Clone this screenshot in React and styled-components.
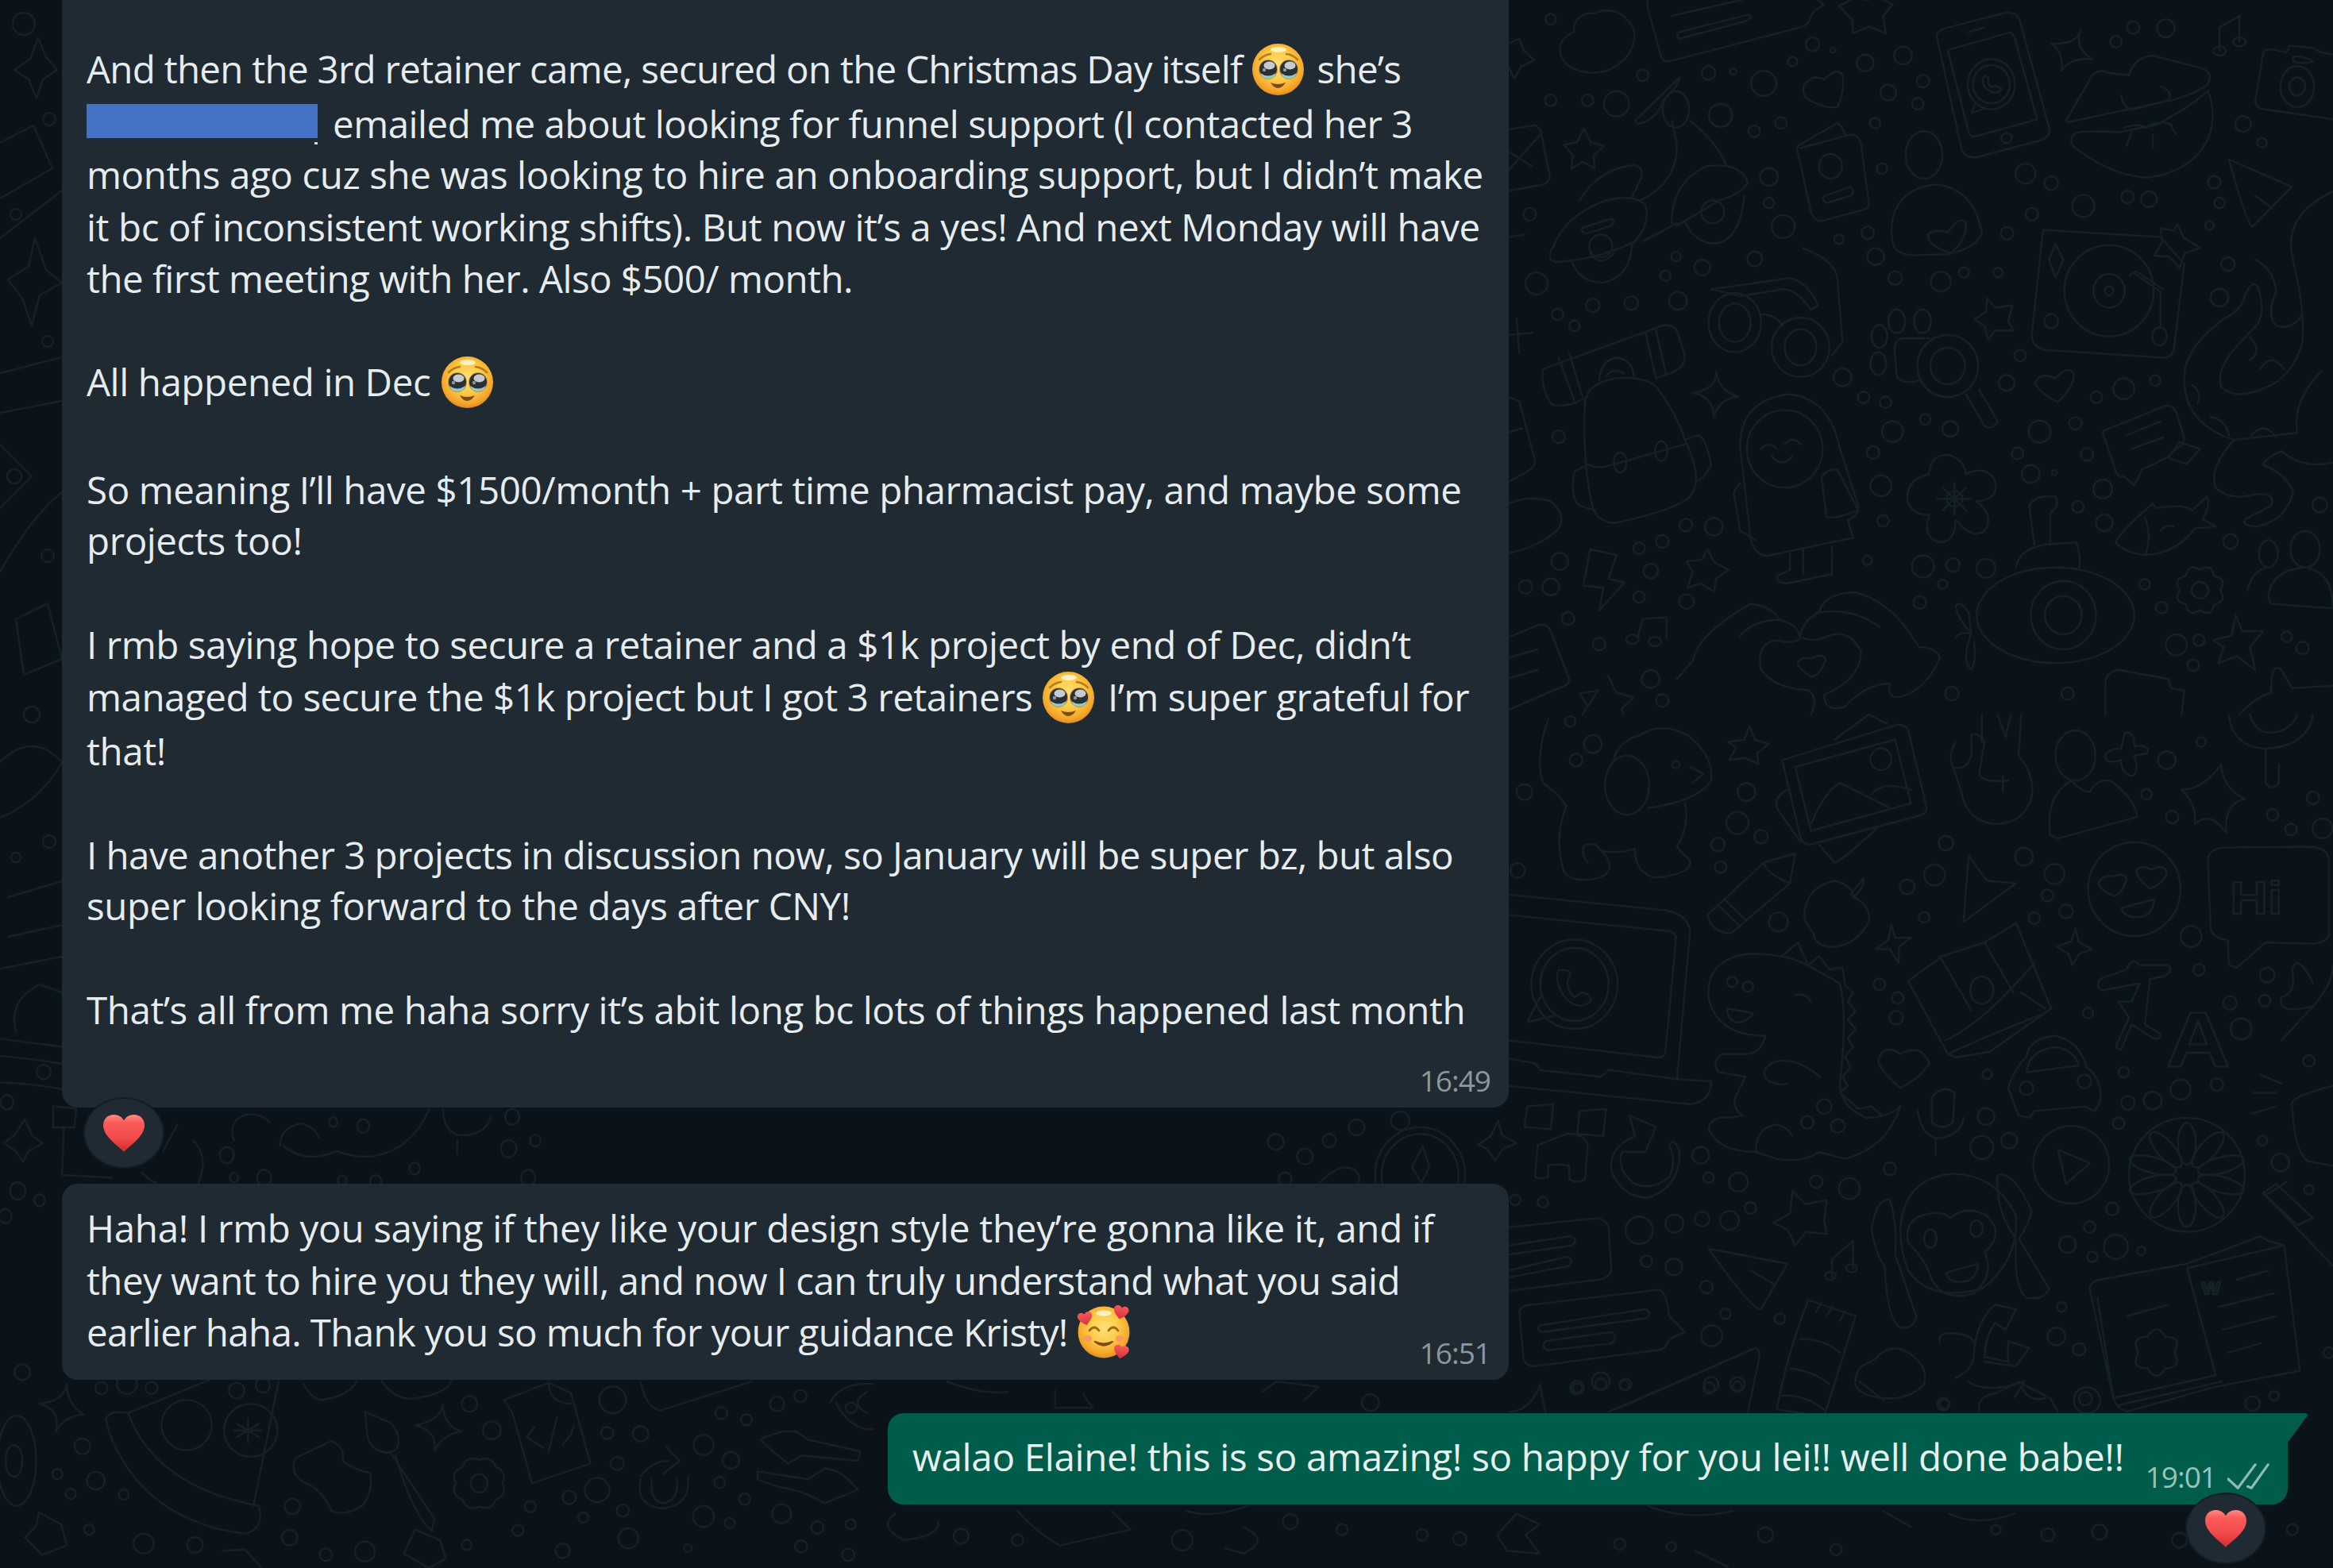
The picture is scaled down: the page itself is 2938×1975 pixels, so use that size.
import React, { useId } from "react";
import styled, { createGlobalStyle } from "styled-components";

const GlobalStyle = createGlobalStyle`
  html, body { margin: 0; padding: 0; background: #0b131a; }
`;

const Page = styled.div`
  position: relative;
  width: 2938px;
  height: 1975px;
  overflow: hidden;
  background: #0b131a;
  font-family: "Open Sans", "Noto Sans", sans-serif;
`;

const DoodleLayer = styled.svg`
  position: absolute;
  inset: 0;
  width: 2938px;
  height: 1975px;
  path, ellipse, text {
    fill: none;
    stroke: #162027;
    stroke-width: 2.5px;
    stroke-linecap: round;
    stroke-linejoin: round;
    vector-effect: non-scaling-stroke;
  }
  text { font-family: "Liberation Sans", sans-serif; font-weight: 700; }
`;

const Chat = styled.main`
  position: relative;
  display: flex;
  flex-direction: column;
  padding: 0 33px 0 78px;
`;

const Bubble = styled.div`
  width: 1822px;
  box-sizing: border-box;
  background: #1f2a32;
  border-radius: ${(p) => (p.$clipped ? "0 0 20px 20px" : "20px")};
  padding: ${(p) => (p.$clipped ? "54px" : "23px")} 23px 14px 31px;
  color: #e7ecee;
  margin-top: ${(p) => (p.$gap ? `${p.$gap}px` : 0)};
`;

const SentRow = styled.div`
  display: flex;
  justify-content: flex-end;
  margin-top: 42px;
`;

const SentBubble = styled.div`
  position: relative;
  width: 1763px;
  box-sizing: border-box;
  margin-right: 24px;
  background: #005c4b;
  border-radius: 20px 0 20px 20px;
  padding: 22px 23px 15px 31px;
  color: #e9f1ef;
  &::after {
    content: "";
    position: absolute;
    top: 0;
    left: 100%;
    width: 25px;
    height: 37px;
    background: #005c4b;
    border-top-right-radius: 3px;
    clip-path: polygon(0 0, 100% 0, 100% 8%, 0 100%);
  }
`;

const Para = styled.div`
  display: flow-root;
  margin-top: ${(p) => (p.$first ? 0 : 65)}px;
`;

const Line = styled.div`
  height: 65px;
  line-height: 65px;
  font-size: 47.5px;
  letter-spacing: ${(p) => p.$ls ?? -0.42}px;
  white-space: nowrap;
  margin-top: ${(p) => p.$nudge || 0}px;
`;

const SplitRow = styled.div`
  display: flex;
  justify-content: space-between;
  align-items: flex-start;
`;

const MetaRow = styled.div`
  display: flex;
  justify-content: flex-end;
  margin-top: 37px;
`;

const Meta = styled.div`
  display: flex;
  align-items: flex-start;
  gap: 14px;
  margin-top: ${(p) => p.$top || 0}px;
`;

const Time = styled.span`
  font-size: 37px;
  line-height: 40px;
  letter-spacing: -1px;
  color: ${(p) => (p.$sent ? "#99c3b9" : "#8e979d")};
`;

const Redacted = styled.span`
  position: relative;
  display: inline-block;
  width: 291px;
  height: 43px;
  margin-right: 19px;
  vertical-align: baseline;
  background: #4472c4;
  outline: 5px solid #1d2b3a;
  &::after {
    content: "";
    position: absolute;
    right: 0;
    bottom: -8px;
    width: 4px;
    height: 3px;
    background: #d5d9db;
  }
`;

const EmojiSvg = styled.svg`
  display: inline-block;
  width: 65px;
  height: 65px;
  overflow: visible;
  vertical-align: ${(p) => p.$drop ?? -15}px;
  margin: 0 ${(p) => p.$after ?? 5}px 0 ${(p) => p.$before ?? 1}px;
`;

const Reaction = styled.div`
  display: flex;
  align-items: center;
  justify-content: center;
  width: 98px;
  height: 86px;
  border-radius: 50%;
  background: #1f2a32;
  box-shadow: 0 0 0 2px #141d24;
  position: relative;
  margin-top: -11px;
  margin-left: ${(p) => (p.$right ? "auto" : "29px")};
  margin-right: ${(p) => (p.$right ? "53px" : 0)};
  ${(p) => p.$right && "margin-top: -13px;"}
`;

const HeartIcon = styled.svg`
  width: 52px;
  height: 47px;
`;

const HEART = "M25.5 46C18 38 0 27 0 13 0 5 6 0 13 0c6 0 10 3 12.5 7C28 3 32 0 38 0c7 0 13 5 13 13 0 14-18 25-25.5 33z";

function Heart() {
  const id = useId();
  return (
    <HeartIcon viewBox="0 0 51 46" aria-hidden="true">
      <defs>
        <linearGradient id={id} x1="0" y1="0" x2="0" y2="1">
          <stop offset="0" stopColor="#ff8a80" />
          <stop offset="0.22" stopColor="#fb5b5a" />
          <stop offset="0.62" stopColor="#f34a4b" />
          <stop offset="1" stopColor="#cf2d2b" />
        </linearGradient>
      </defs>
      <path d={HEART} fill={`url(#${id})`} />
    </HeartIcon>
  );
}

function FaceGradient({ id }) {
  return (
    <radialGradient id={id} cx="0.5" cy="0.42" r="0.58">
      <stop offset="0" stopColor="#ffe07a" />
      <stop offset="0.5" stopColor="#fccb45" />
      <stop offset="0.85" stopColor="#f5a62a" />
      <stop offset="1" stopColor="#e58a24" />
    </radialGradient>
  );
}

function PleadingFace(props) {
  const id = useId();
  const eye = (cx) => (
    <g>
      <ellipse cx={cx} cy="32.5" rx="12" ry="12.5" fill="#c98f35" />
      <circle cx={cx} cy="32" r="11" fill="#2a3035" />
      <ellipse cx={cx + 1.5} cy="27.5" rx="7" ry="5" fill="#c5cbce" />
      <circle cx={cx - 5} cy="33" r="2.2" fill="#8d979c" />
      <path d={`M${cx - 10} 37Q${cx} 44 ${cx + 10} 37L${cx + 7} 42Q${cx} 46 ${cx - 7} 42z`} fill="#8fcdca" />
    </g>
  );
  return (
    <EmojiSvg viewBox="0 0 65 65" aria-hidden="true" {...props}>
      <defs><FaceGradient id={id} /></defs>
      <circle cx="32.5" cy="32.5" r="32.5" fill={`url(#${id})`} />
      <ellipse cx="33" cy="7.5" rx="10" ry="3.5" fill="#fff2c0" />
      <path d="M9 20Q15 14 23 13" fill="none" stroke="#b27d22" strokeWidth="2.6" strokeLinecap="round" />
      <path d="M43 13Q51 14 57 20" fill="none" stroke="#b27d22" strokeWidth="2.6" strokeLinecap="round" />
      {eye(20)}
      {eye(46)}
      <path d="M23 49Q32 53 42 49Q38 56 32 56Q27 56 23 49z" fill="#7c4b1c" />
    </EmojiSvg>
  );
}

function HeartsFace(props) {
  const id = useId();
  const hg = useId();
  const heart = (x, y, s, r) => (
    <path d={HEART} fill={`url(#${hg})`} transform={`translate(${x} ${y}) rotate(${r}) scale(${s})`} />
  );
  return (
    <EmojiSvg viewBox="0 0 65 65" aria-hidden="true" {...props}>
      <defs>
        <FaceGradient id={id} />
        <linearGradient id={hg} x1="0" y1="0" x2="0" y2="1">
          <stop offset="0" stopColor="#f9595c" />
          <stop offset="1" stopColor="#d92c3c" />
        </linearGradient>
      </defs>
      <circle cx="33" cy="33" r="32.5" fill={`url(#${id})`} />
      <ellipse cx="33" cy="9" rx="10" ry="3.5" fill="#fff2c0" />
      <path d="M15 31Q21 23 27 31" fill="none" stroke="#9a6a1c" strokeWidth="2.8" strokeLinecap="round" />
      <path d="M39 31Q45 23 51 31" fill="none" stroke="#9a6a1c" strokeWidth="2.8" strokeLinecap="round" />
      <ellipse cx="13" cy="41" rx="5" ry="4" fill="#f79a62" />
      <ellipse cx="53" cy="41" rx="5" ry="4" fill="#f79a62" />
      <path d="M22 45Q33 54 44 45Q33 50 22 45z" fill="#7c4b1c" stroke="#7c4b1c" strokeWidth="2.2" strokeLinejoin="round" />
      {heart(-1, 10, 0.36, -12)}
      {heart(47, -2, 0.37, 12)}
      {heart(47, 48, 0.37, 10)}
    </EmojiSvg>
  );
}

const TickSvg = styled.svg`
  display: block;
  width: 53px;
  height: 36px;
  margin-top: 2px;
  path { fill: none; stroke: #8dbcb1; stroke-width: 3.4; stroke-linecap: round; stroke-linejoin: round; }
`;

function scallop(cx, cy, rx, ry, n, d) {
  let s = "";
  for (let i = 0; i < n; i++) {
    const a = (i / n) * Math.PI * 2;
    const m = ((i + 0.5) / n) * Math.PI * 2;
    const b = ((i + 1) / n) * Math.PI * 2;
    if (i === 0) s += `M${cx + rx * Math.cos(a)} ${cy + ry * Math.sin(a)}`;
    s += `Q${cx + rx * (1 + d) * Math.cos(m)} ${cy + ry * (1 + d) * Math.sin(m)} ${cx + rx * Math.cos(b)} ${cy + ry * Math.sin(b)}`;
  }
  return s + "z";
}

const LAYERS = [
  {
    tf: "translate(1900 0) scale(.662 .574)", k: 1.15,
    paths: [
      "M125 70c-5-25 15-45 40-40c20-15 50-5 60 15c25 20 15 70-15 95c-25 25-70 25-95 5c-25-20-25-60 10-75z",
      "M265 20L290 125Q295 138 310 133L555 60Q572 55 575 35Q580 20 600 12L580-10L262-10z",
      "M310 35L460-5M325 85L455 45Q465 35 455 32L325 70Q315 80 325 85z",
      "M660-5l20 5 25-5 25 15-18 25 5 38-32-15-30 15-2-30-25-30z",
      "M815 85Q810 70 830 62L945 28Q965 25 972 45L1028 280Q1032 300 1012 308L890 345Q870 348 862 330Z",
      "M835 110L950 72Q958 70 962 82L1005 262L885 300Q878 300 875 290Z", "M875 70L905 60",
      "M905 165Q895 185 915 200Q930 208 938 195L925 188L918 192Q910 185 913 172z M888 225L880 248L905 238",
      "M1088 65Q1080 100 1030 95Q1055 110 1052 155Q1070 125 1110 130Q1075 105 1088 65z",
      "M1060 265L1110 165Q1125 150 1140 160L1180 165Q1190 125 1225 122L1320 150Q1345 165 1325 190Q1290 215 1240 225L1065 268Z",
      "M1075 295Q1080 285 1160 290L1230 275Q1290 240 1330 200Q1345 240 1335 290Q1310 375 1215 390Q1150 385 1090 335Q1060 315 1075 295z",
      "M1165 210Q1170 240 1190 240L1255 220Q1265 200 1240 190M1170 280Q1200 270 1210 280Q1240 260 1262 275M1175 320L1185 290M1225 325V295M1270 295L1260 278",
      "M1352 60L1390 35V90M1352 60V110",
      "M1420 225L1435 115Q1440 105 1460 110L1480 115L1485 100L1530 105L1545 115L1568 120M1420 225Q1425 240 1440 240L1568 262",
      "M1492 125Q1510 120 1530 135Q1510 142 1492 135z",
      "M0 95l20-10 8 25 20 22-25 15-12 25-12-25",
      "M-5 285L50 275Q60 280 62 295L78 385Q78 400 65 405L-5 420M-5 380L60 295M-5 330L45 365",
      "M143 282l13 30 25 8-20 22 3 28-23-15-22 15 3-30-17-22 25-6z",
      "M600 175Q625 145 635 165Q640 200 625 235Q600 240 565 215Q550 185 580 170Q595 170 600 175z",
      "M550 320L625 270Q635 275 640 298L655 295Q665 298 670 315L685 445Q685 460 670 462L595 485Q580 485 575 465L548 325ZM555 325L640 298",
      "M600 430L650 410Q660 420 650 430L605 445Q595 440 600 430z",
      "M735 545Q725 530 730 480Q745 410 815 405Q885 415 900 510Q895 535 860 550L835 558L770 560Q745 560 735 545z",
      "M835 510Q860 470 870 490Q870 530 840 555Q800 540 797 520Q800 500 835 510z",
      "M80 570Q75 560 85 540Q110 470 185 440Q240 425 260 450Q270 490 240 530Q170 570 90 575z",
      "M140 500L195 480Q205 485 195 495L150 512Q135 510 140 500z",
      "M135 440Q170 370 240 362Q260 370 250 395L235 432M120 575Q135 620 180 620Q230 610 235 535M155 555Q175 590 200 555",
      "M310 490Q310 400 375 365Q440 355 455 400Q445 425 400 440L320 495zM335 485Q350 530 390 535Q440 530 448 430M255 530L320 490",
      "M250 440Q320 400 320 320Q315 290 310 265M345 265Q395 310 415 365M240 265L325 170Q325 185 295 220Q280 265 245 272z",
      "M385 635L535 610Q570 620 588 670L575 680Q545 630 520 635L440 650Q410 640 385 635z",
      "M560 545Q620 570 625 610L635 750L615 780M480 690Q510 690 520 715",
      "M800 742L750 742Q730 745 735 780L738 825Q745 845 780 835M870 865L905 935Q920 945 930 925L895 855",
      "M65 810L280 720Q305 705 320 725L335 780Q335 810 305 820L280 830M65 810Q60 850 80 885Q90 895 125 885L150 870",
      "M95 785L125 880M115 775L140 870M260 730L280 830M280 725L300 825M172 835Q175 790 205 785Q235 790 238 825M185 825Q200 805 220 820",
      "M145 880Q150 840 205 830Q265 825 285 855Q320 910 335 965Q375 1060 340 1095Q300 1125 200 1148Q170 1145 160 1115Q140 1020 145 880z",
      "M150 1018Q165 1030 190 1022L335 975M150 1020L125 1035Q115 1090 135 1110L165 1120M335 965L360 955Q375 960 385 1020Q375 1045 360 1055",
      "M395 815Q395 855 350 862Q390 870 390 915Q400 875 437 870Q400 860 395 815z",
      "M440 980Q440 880 530 865Q610 870 630 985L665 1110Q665 1135 645 1140L655 1180L490 1220Q465 1215 460 1180Z",
      "M480 985Q495 965 510 985M525 975Q540 955 555 975M500 1000Q520 1030 540 1000",
      "M595 1050Q600 1030 625 1030L665 1120L625 1135L605 1135ZM440 1060L428 1080L440 1165L470 1185",
      "M535 1215L535 1250L510 1265Q510 1280 530 1280L615 1260L615 1200M560 1205L560 1260",
      "M800 1040Q800 1000 835 998Q865 1005 870 1040Q910 1020 925 1055Q935 1095 890 1100Q925 1130 905 1165Q880 1185 850 1140Q850 1190 820 1190Q785 1180 800 1130Q760 1130 758 1090Q760 1050 800 1040z",
      "M848 1060V1130M815 1095H880M825 1070L870 1120M870 1070L825 1120",
      "M1020 505L1240 520L1285 580L1265 770Q1260 785 1245 785L1020 768Q995 760 995 735L1015 520Q1015 505 1020 505z",
      "M1190 600L1240 640L1240 715M1182 605Q1190 590 1200 600L1245 635M1040 535L1055 570L1040 610L1028 570z",
      "M1272 492l12 30 32 22-30 12-10 32-20-25-28-2 15-30-3-30 25 5z",
      "M910 655L925 675L958 670L950 705L960 725L925 725L912 745L905 715L885 700L908 685z",
      "M1040 830Q1065 800 1075 820Q1075 850 1045 882Q1005 860 1002 840Q1010 815 1040 830z",
      "M1132 945L1250 890Q1265 890 1270 905L1285 960Q1285 975 1270 985L1250 1005Q1225 1020 1205 1030L1190 1065L1170 1045Q1160 1050 1155 1035L1130 950z",
      "M1175 955L1240 925M1185 985L1245 960M1255 1005L1275 970L1315 985L1290 1018z",
      "M965 1245Q970 1205 1020 1195L1080 1190Q1090 1230 1085 1245M1000 1195L990 1110Q1000 1085 1040 1090Q1050 1110 1030 1125L1030 1195",
      "M880 1390Q855 1360 850 1330Q860 1315 875 1345L880 1390Q860 1450 880 1470Q890 1450 885 1410M850 1400Q855 1385 880 1390",
      "M1155 1190Q1160 1170 1225 1105L1230 1115Q1290 1105 1300 1120L1328 1090Q1335 1110 1320 1140L1345 1155L1305 1160Q1270 1215 1210 1218Q1165 1210 1155 1190z",
      "M1210 1135Q1225 1180 1210 1218M1240 1165Q1250 1150 1265 1155",
      scallop(1315, 1295, 38, 44, 8, 0.5),
      "M1445 1310Q1450 1250 1515 1245Q1568 1255 1568 1335L1450 1325zM1405 1295Q1415 1250 1445 1245",
      "M1370 350L1490 410L1455 450L1415 498Q1405 495 1370 350zM1420 430L1450 455",
      "M1285 820Q1290 760 1360 700Q1395 680 1400 650Q1415 610 1425 630Q1440 680 1425 710L1385 760Q1345 810 1355 850Q1385 880 1440 850Q1490 830 1510 750Q1515 680 1490 560Q1475 470 1568 420",
      "M1285 820Q1280 930 1380 965L1500 950M1420 570Q1455 590 1460 640Q1440 690 1460 715Q1490 725 1510 690",
      "M1300 845Q1320 860 1310 885M1335 915Q1365 920 1370 955M1410 960Q1435 920 1460 960M1410 740Q1435 770 1410 790M1430 810Q1450 770 1475 810",
      "M1380 965Q1330 1030 1345 1070Q1370 1100 1420 1085Q1460 1080 1450 1110L1400 1140Q1395 1155 1425 1155Q1480 1140 1492 1080Q1480 1040 1435 1020Q1440 1005 1470 990Q1510 1030 1568 1015M1500 950Q1490 880 1545 815",
      "M320 1490Q350 1450 350 1450Q360 1390 460 1325Q500 1330 515 1360M440 1395Q465 1360 515 1360Q550 1370 555 1400Q545 1415 510 1405Q470 1410 480 1470Q505 1510 570 1515Q590 1530 575 1568",
      "M555 1395Q560 1360 590 1345Q600 1300 660 1300Q730 1320 780 1420Q815 1420 820 1445Q790 1520 740 1530Q720 1530 725 1500Q680 1500 640 1550Q600 1565 600 1525Q670 1490 670 1430Q650 1380 610 1395Q580 1410 560 1400M585 1345Q650 1330 705 1375",
      "M575 1445Q600 1430 603 1450Q590 1485 575 1485Q550 1465 550 1455Q555 1440 575 1445z",
      "M155 1205L205 1218L190 1270L220 1278L172 1340L180 1290L142 1285z",
      "M378 1205L392 1235L418 1250L395 1270L390 1298L365 1280L340 1290L350 1255L338 1232L368 1228z",
      "M255 1358L300 1355V1400M255 1358L245 1400",
      "M-5 1400L60 1370Q75 1370 80 1385L115 1490Q115 1505 95 1510L-5 1560M-5 1445L55 1425M-5 1490L55 1470",
      "M188 1480L205 1520L238 1530L215 1555L218 1568M140 1568L150 1550L135 1522L170 1515z",
      "M0 1105Q40 1085 80 1100Q110 1130 95 1160Q60 1200-5 1215",
      "M-5 870L20 880L50 1010Q50 1025 35 1035L-5 1060M-5 950L25 940",
      "M1135 1500Q1135 1475 1160 1470L1255 1490L1260 1510L1285 1515L1280 1568M1135 1500V1568",
      "M1383 1350L1395 1385L1435 1385L1410 1420L1420 1470L1385 1440L1350 1455L1360 1420L1340 1405L1375 1395z",
      "M1390 1568Q1420 1530 1450 1520Q1450 1450 1470 1470L1490 1510L1568 1505",
      "M0 520L30 515M0 735L45 730M15 700L20 775",
    ],
    ells: [
      [918,185,45,55],[918,185,35,42],[947,303,10,11],[790,340,35,52],[1352,112,12,10],[1390,92,12,10],[1500,190,32,45],[1500,190,15,20],
      [612,365,22,27],[318,240,25,40],[175,540,22,25],[388,465,22,25],[430,708,50,65],[430,708,30,42],[555,762,55,65],[555,762,30,40],
      [738,705,16,26],[787,705,16,26],[705,738,15,25],[703,798,15,25],[835,803,58,68],[835,803,33,40],[212,1015,12,22],[290,990,12,22],
      [525,985,72,85],[848,1095,15,17],[1142,638,85,100],[1142,638,30,37],[1142,638,8,10],[1238,738,14,20],[1032,705,13,16],
      [1040,1350,150,105],[1055,1350,62,75],[1055,1350,35,42],[1315,1295,16,18],[1515,1205,28,40],[1445,1215,18,30],[235,1403,12,10],[278,1408,12,10],
    ],
    dots: [[80,42,10],[255,165,11],[380,160,13],[427,157,6],[485,183,24],[578,97,13],[617,110,5],[540,135,9],[678,138,16],[750,122,17],[788,178,12],[722,203,15],[778,228,11],[80,220,11],[150,220,11],[205,228,24],[403,253,22],[518,270,11],[467,288,11],[697,270,10],[495,388,17],[495,445,10],[710,370,10],[522,497,22],[40,470,12],[628,525,9],[683,511,12],[698,563,16],[318,563,9],[368,587,15],[298,605,10],[468,568,14],[735,610,13],[822,618,19],[866,598,10],[931,598,9],[53,622,21],[160,670,13],[233,665,13],[322,660,17],[93,690,11],[125,715,10],[635,828,17],[675,872,11],[717,883,11],[792,920,10],[730,947,20],[840,941,15],[693,993,12],[95,958,12],[708,1066,20],[712,1143,11],[337,1152,12],[390,1156,17],[248,1203,11],[292,1188,12],[97,1232,16],[270,1253,14],[32,1288,13],[80,1288,16],[248,1310,11],[338,1320,14],[113,1357,12],[172,1413,12],[270,1490,17],[292,1537,12],[682,1230,9],[788,1243,21],[845,1240,13],[908,1247,18],[825,1282,9],[782,1322,12],[843,1522,13],[1063,1522,12],[1155,92,11],[1188,60,12],[1250,62,17],[983,381,19],[1032,402,13],[1093,452,21],[1177,432,12],[1218,437,15],[995,470,12],[948,512,12],[1397,272,15],[1433,313,9],[1342,400,12],[1352,445,10],[1333,495,8],[1368,580,13],[1352,653,17],[973,780,11],[947,840,15],[1118,872,11],[1170,853,20],[1230,835,10],[1010,947,21],[1078,929,12],[968,995,11],[1100,997,12],[993,1040,17],[1038,1037,5],[1130,1073,18],[1083,1112,11],[1133,1147,16],[1373,1188,14],[1543,1108,14],[1210,1282,10],[1242,1333,11],[1270,1415,20],[1313,1405,11],[1302,1460,11],[1480,1397,10],[1510,1422,12]],
  },
  {
    tf: "translate(1900 900) scale(.662 .574)", k: 1.15,
    paths: [
      "M75 10Q50 90 65 150Q90 170 110 200Q85 270 105 345Q120 370 165 360Q205 350 185 310L165 285L145 285Q135 300 150 325M180 300Q210 305 240 295Q240 350 280 358Q350 350 345 320Q325 300 320 290Q345 240 335 195",
      "M200 100Q205 60 250 45Q290 15 340 45Q390 90 385 145Q360 190 265 205M345 115L370 130L350 150",
      "M458 25L468 55L495 65L472 85L475 108L448 95L420 100L432 72L418 60L448 55z",
      "M520 100L740 22Q755 22 760 35L795 205Q795 218 780 222L575 285Q560 288 555 270Z",
      "M545 115L735 55L765 195L575 255ZM575 240Q600 170 630 150L725 205M690 175Q710 145 765 165",
      "M530 165Q505 180 510 205L555 280M590 285L620 325Q635 320 700 250M620 55L685 0L720 20",
      "M850 60Q835 90 845 115Q870 125 880 90L880 45Q890 35 905 60Q900 95 895 130Q900 150 950 145M900 0L900 60M975 0L970 90Q1000 130 995 180Q980 240 925 240Q870 235 860 165L845 115M940 135V170M930 0L945 50L955 0",
      "M1030 265Q1020 180 1070 145Q1090 170 1105 170Q1120 140 1145 145Q1195 190 1195 225L1045 272Z",
      "M1172 40Q1190 35 1190 70Q1220 65 1215 85L1190 90Q1200 130 1185 135Q1165 130 1165 100Q1135 110 1135 90Q1140 75 1165 75z",
      "M1355 110Q1360 165 1400 185Q1360 195 1365 260Q1335 210 1305 240Q1310 200 1280 165Q1320 165 1355 110z",
      "M1370 0Q1375 70 1440 75Q1520 70 1530 0M1410 0Q1420 40 1450 40Q1490 35 1500 0M1440 80V150Q1450 170 1465 150V110",
      "M1330 320Q1330 295 1360 292L1530 290Q1560 295 1560 320L1560 480Q1560 500 1530 503L1440 500L1385 555L1370 550L1368 495Q1335 490 1335 465z",
      "M1150 355Q1175 345 1175 365Q1165 395 1150 398Q1125 385 1122 370Q1130 350 1150 355z",
      "M1222 340Q1250 325 1252 350Q1240 375 1220 382Q1190 355 1195 340Q1205 330 1222 340z",
      "M1165 425L1228 405Q1225 445 1195 445Q1170 445 1165 425z",
      "M378 440L485 325L545 305L535 370L425 478Q405 485 385 460zM485 325Q490 350 535 370M400 420L440 465M410 405L450 450",
      "M620 365Q655 375 655 400Q690 420 685 455Q660 510 610 510Q580 505 580 480Q555 450 565 420Q575 375 620 365zM650 395L675 360Q675 385 655 400",
      "M875 310L910 365L965 370L865 455z",
      "M728 462L735 490L765 490L742 510L742 545L725 515L698 515L722 495z",
      "M1078 470L1085 500L1110 515L1085 525L1072 550L1065 525L1042 510L1070 498z",
      "M0 395L300 430Q340 440 345 475L320 800L385 805Q385 850 345 855L0 815M0 440L305 475Q320 480 318 495L298 740Q295 755 280 752L0 715M0 755L50 765L60 780L175 795L190 780L320 800",
      "M60 620L35 675L90 660M95 560Q85 590 110 625Q135 650 155 630Q160 615 140 610L125 620Q105 600 115 575Q125 560 95 560z",
      "M380 620Q375 535 460 525Q520 525 560 545L630 590Q645 660 630 810Q630 860 680 885Q720 885 745 860Q720 950 640 975L590 960Q560 985 510 975L470 960Q400 960 380 910Q385 880 420 885L445 880Q420 860 435 830L450 795L400 785Q385 765 405 745L450 745Q480 745 488 705Q395 705 380 620z",
      "M415 645L465 655Q450 680 430 675Q415 665 415 645zM545 615Q565 610 575 630M592 795Q540 745 500 765Q475 785 495 805Q520 815 530 810M470 960Q470 905 510 900Q530 905 540 925",
      "M520 530L550 500L570 550L590 530L610 560L635 555L640 595L655 610L645 630L660 650L645 670L660 690L645 710L655 730L640 750L650 775L635 795L645 815L630 830L650 850L665 865L690 860L710 880",
      "M745 745Q785 720 800 765Q785 795 745 820Q705 780 703 760Q710 720 745 745z",
      "M760 585L825 530L905 500L965 458L1032 645L915 740L850 752L835 745zM905 500L960 610M820 530L880 650M830 715Q900 680 1000 545M835 745Q920 700 1010 660M975 610L1020 645",
      "M1125 580L1175 560Q1185 530 1200 550L1255 550Q1265 565 1245 575L1220 580L1210 680L1240 700Q1240 715 1225 710L1185 680L1165 735Q1150 735 1160 715L1180 665L1160 630L1185 630L1200 590L1130 605Q1115 600 1125 580z",
      "M1530 590Q1500 520 1490 560Q1500 610 1470 620Q1460 660 1530 640L1470 715M1530 640Q1568 590 1568 550",
      "M985 750Q990 710 1040 705Q1085 715 1100 775Q1130 800 1125 850L1115 870L1095 860L1000 870L990 885L970 880L950 820Q960 780 985 750zM985 785Q990 735 1040 730Q1075 735 1085 770z",
      "M805 840Q825 810 848 830L845 895Q825 915 805 895zM778 870Q785 925 815 930Q860 925 865 885M812 930V965",
      "M1045 955L1105 985L1060 1030z",
      "M1435 1050L1568 1210M1460 1030L1530 1105L1500 1120L1435 1050zM1480 1025L1440 1055",
      "M1430 790L1470 810M1415 830L1460 830M1415 875L1460 860M1490 860Q1480 840 1568 815M1490 860Q1495 960 1520 980L1568 990",
      "M0 1125L170 1105Q185 1110 190 1125L195 1220Q190 1238 170 1240L0 1265M0 1165L115 1145Q135 1150 120 1165L0 1185M0 1220L110 1190Q125 1195 115 1210L0 1235",
      "M35 860L85 855L80 910L30 905zM135 870L185 865L180 925L130 920zM55 945L110 920Q150 920 150 950L145 1020Q130 1030 115 1020L115 990Q85 985 75 990L75 1015Q60 1020 50 1015z",
      "M240 925Q190 950 195 1000Q215 1060 265 1060Q325 1040 325 960Q315 925 305 945Q320 980 305 1015Q275 1045 240 1030Q205 1000 215 960L260 960L280 905L230 880z",
      "M540 1045L565 1075L605 1065L600 1110L605 1140L565 1135L545 1165L530 1130L503 1115L535 1095z",
      "M380 1172L530 1205L480 1305Q465 1310 380 1172zM460 1220L505 1250",
      "M615 1195L655 1155V1215M615 1195V1235",
      "M745 1130Q750 1020 840 1008Q925 1005 965 1100Q970 1200 900 1260Q800 1290 760 1220Q745 1180 745 1130z",
      "M760 1160Q750 1105 800 1095Q830 1090 840 1105Q870 1075 910 1100Q945 1140 905 1180Q925 1230 885 1270Q830 1290 805 1240Q790 1190 760 1160z",
      "M832 1225L893 1205Q890 1245 860 1245Q835 1245 832 1225z",
      "M690 1130Q700 1060 725 1065Q740 1120 735 1185L775 1320Q770 1350 745 1345Q720 1330 715 1210Q700 1190 690 1130zM930 1010Q960 1000 995 1090Q985 1130 970 1150L1028 1260Q1020 1285 985 1280Q960 1260 965 1150Q925 1090 930 1010z",
      "M570 1285L660 1320L600 1540L510 1525Q530 1400 570 1285zM595 1290L585 1310M615 1300L605 1320M640 1310L630 1330M555 1370Q600 1370 630 1400M535 1435Q580 1440 610 1470M515 1495Q560 1490 600 1525",
      "M680 1425Q700 1415 705 1405Q730 1380 760 1400Q800 1430 790 1470Q760 1505 710 1500Q650 1490 660 1455Q665 1430 680 1425z",
      "M850 1455Q885 1440 885 1400Q890 1330 925 1295L965 1305L945 1350L925 1335Q905 1370 905 1410L950 1420L950 1375L990 1390L965 1430Q930 1425 905 1420M820 1375Q815 1355 850 1358Q880 1360 885 1380",
      "M1105 1260Q1105 1245 1125 1240L1290 1205L1430 1145L1445 1155L1475 1165L1505 1440L1345 1475L1175 1530Q1155 1520 1150 1500zM1120 1280L1150 1500L1345 1450L1290 1215M1290 1215L1475 1165",
      "M1175 1320L1255 1295M1385 1240L1445 1220M1350 1300L1455 1270M1358 1350L1460 1320M1368 1400L1430 1380",
      scallop(1232, 1400, 34, 40, 6, 0.7),
      "M20 1310Q25 1295 45 1295L285 1262Q300 1265 305 1320L335 1355L305 1370Q300 1395 280 1395L50 1430Q30 1430 28 1410z",
      "M60 1340L260 1305Q275 1315 260 1325L65 1355Q50 1350 60 1340zM70 1375L195 1355Q210 1365 195 1380L75 1395Q60 1390 70 1375z",
      "M190 1530L470 1390Q480 1395 475 1420L455 1530M895 1530Q890 1495 925 1490L970 1465L1030 1500L1045 1530M975 1470Q985 1510 1020 1500M0 1530Q40 1530 60 1470Q65 1510 70 1530",
    ],
    ells: [
      [225,155,42,65],[318,110,7,8],[708,98,20,24],[1078,90,38,55],[1190,383,88,103],[125,592,82,98],[125,592,65,80],[425,587,10,11],[455,597,10,11],[900,605,22,30],
      [985,820,13,15],[1095,805,13,15],[1070,988,72,85],[1290,1010,110,125],[802,1150,12,20],[890,1128,12,18],[612,1232,10,9],[652,1215,10,9],
    ],
    petals: { cx: 1290, cy: 1010, n: 10 },
    labels: [["Hi", 1372, 438, 100], ["A", 1250, 772, 170], ["W", 1318, 1272, 38]],
    dots: [[117,15,10],[160,65,17],[128,100,12],[30,170,15],[452,170,17],[435,238,21],[480,268,13],[398,285,13],[403,335,11],[17,342,14],[832,282,14],[513,455,18],[758,378,14],[810,352,20],[790,445,10],[980,312,17],[1038,350,19],[1025,397,11],[1060,432,13],[1000,447,11],[1252,100,17],[1213,175,10],[1317,60,9],[1262,225,12],[1453,220,11],[1530,183,12],[1488,252,11],[1548,250,19],[1298,487,20],[1313,560,11],[1443,572,14],[1438,628,11],[1372,633,13],[1393,690,20],[1102,655,10],[1522,760,11],[1170,785,10],[1178,852,13],[1225,847,17],[1278,823,19],[1347,812,12],[1160,897,11],[705,592,11],[740,622,11],[737,665,13],[910,790,9],[908,882,16],[952,935,15],[900,950,22],[600,860,14],[568,895,12],[626,903,13],[365,967,16],[380,1016,10],[437,1026,18],[725,997,12],[585,1025,12],[648,1040,20],[12,1065,10],[65,1070,10],[248,1132,26],[315,1117,17],[368,1107,14],[420,1110,18],[460,1083,11],[262,1200,11],[314,1212,16],[376,1256,12],[412,1315,10],[386,1363,20],[516,1326,10],[1148,1085,12],[1105,1125,11],[1063,1163,16],[1155,1168,23],[1110,1190,10],[1203,1177,8],[1468,983,17],[1434,935,9],[1522,1043,9],[1052,1300,9],[1042,1365,17],[1085,1393,12],[130,1477,13],[175,1463,17],[222,1470,11],[385,1470,14],[435,1470,14],[827,1513,12],[1100,1505,25],[1415,1512,14],[1456,1495,9],[1560,1400,10]],
  },
  {
    tf: "translate(0 1700) scale(.7015 .3333)", k: 2.1,
    paths: [
      "M230 240L375 115M190 260Q200 225 230 240Q280 520 465 590Q475 680 440 695Q300 660 230 450Q195 340 190 260zM500 120L455 590",
      "M445 260V350M420 305H470M425 280L465 330M465 280L425 330",
      "M120 130Q115 195 70 205Q110 225 100 310Q115 250 150 245Q120 205 120 130z",
      "M655 235L700 275Q725 330 710 380L695 390Q665 380 660 330zM700 385L780 640L775 685Q740 620 710 400",
      "M595 345Q620 370 615 420Q640 460 665 465Q670 540 650 590Q620 630 595 610Q580 530 545 500Q520 470 530 410Q560 380 595 345z",
      "M795 210Q790 270 745 285Q785 305 780 380Q795 320 828 310Q795 280 795 210z",
      "M905 190L985 125L1025 165L1060 430L955 505L920 240zM985 125Q985 200 1025 205M960 290L945 330L975 370M1030 290L1025 320L1010 360M1000 255L985 385",
      scallop(860, 505, 42, 88, 8, 0.32),
      "M1195 365L1220 420L1190 470M1150 480Q1170 420 1200 420M1150 490Q1140 590 1190 600Q1240 590 1235 480M1170 490Q1165 570 1190 580Q1220 570 1215 490",
      "M1365 340Q1400 300 1430 310L1450 340L1545 385L1540 420L1440 400L1415 430Q1395 400 1365 340zM1360 460L1450 490L1480 450Q1510 450 1540 530L1480 580Q1440 530 1400 520L1360 490z",
      "M70 615L110 660L120 740L75 775L45 710L65 665z",
      "M745 680L790 720L800 790L770 825L725 770z",
      "M400 760L440 755L470 825M545 130Q560 190 580 190Q630 170 640 120M685 120Q710 190 740 185Q800 170 810 120M1150 120Q1160 220 1185 230L1350 120",
      "M1490 200Q1510 120 1568 130M1500 200Q1530 310 1568 300",
    ],
    ells: [[30,420,35,170],[25,420,15,60],[335,285,45,95],[450,305,48,100],[860,505,15,35],[1528,220,10,20]],
    dots: [[40,85,14],[182,145,11],[228,130,18],[272,145,11],[425,155,14],[472,135,13],[843,205,14],[883,305,16],[1100,190,24],[1090,315,11],[1150,318,14],[1295,240,11],[1340,265,10],[1395,205,13],[1437,175,11],[148,365,14],[103,470,9],[172,495,16],[127,545,9],[222,548,9],[525,592,14],[160,680,9],[258,733,18],[350,738,14],[520,710,14],[585,775,11],[655,763,18],[838,738,9],[930,683,10],[1010,760,13],[1128,713,18],[1235,750,7],[1438,743,11],[1523,775,11],[1108,430,12],[1263,360,18],[1312,418,15],[1292,502,10],[1072,530,22],[1022,558,12],[952,593,10],[1118,608,11],[1047,635,9],[1337,565,10],[1263,630,19],[1310,655,9],[1403,620,17],[1467,672,11],[1527,660,9]],
  },
  {
    tf: "translate(1080 1640) scale(1.1848 .3333)", k: 3.55,
    paths: [
      "M40 800Q20 850 50 900Q90 880 85 830M170 790Q190 870 215 920L290 860L270 790M350 790Q375 820 415 770",
      "M700 800L725 840L710 880L725 950L690 940L680 880z",
      "M840 770Q880 830 930 790M1090 790L1120 850M890 940L925 1000M410 850Q440 900 410 950L390 930",
      "M95 300Q130 350 160 340M430 340L445 300L490 320L475 370M1065 300L1090 370M810 400L950 180M1340 390L1450 300",
      "M1160 800Q1190 850 1230 800M1180 300Q1200 350 1240 300L1230 360",
      "M10 340Q-10 380 10 420M210 335V400L250 400L240 350",
    ],
    ells: [],
    dots: [[110,885,8],[170,900,6],[345,900,11],[460,830,8],[515,860,6],[600,880,6],[640,895,7],[810,915,6],[865,925,5],[965,880,8],[1040,935,6],[1210,860,5],[1265,880,7],[1320,870,8],[1405,900,8],[1465,870,6],[1525,860,6],[765,325,5],[790,310,6],[815,315,5],[905,325,6],[935,318,5],[1155,385,5],[1305,365,7],[545,380,9]],
  },
  {
    tf: "translate(0 1250) scale(.4464 .3333)", k: 1.5,
    paths: [
      "M660 560Q640 480 700 460Q740 460 760 490M790 580Q790 510 850 495Q890 510 900 550M800 580Q860 650 950 600Q1050 650 1130 580Q1190 520 1210 440",
      "M1250 440Q1250 530 1300 540Q1370 540 1385 470M1290 560V610",
      "M150 430L215 440L210 510L150 510zM180 510L175 690L315 700M500 500L460 600M545 560Q590 620 560 720M400 680Q420 710 440 720",
      "M70 480L90 540L120 570L80 600L65 640L45 600L10 570L40 540z",
      "M0 175Q80 190 175 205M0 240Q90 250 175 270M0 340Q90 345 175 365",
    ],
    ells: [],
    dots: [[940,490,12],[1025,505,17],[640,615,20],[1445,470,20],[1510,560,15],[1435,590,22],[1170,665,15],[660,700,12],[20,415,18],[50,750,22],[112,785,15],[15,845,18],[745,700,20],[965,710,12],[1060,715,16],[1490,700,20]],
  },
  {
    tf: "translate(1600 1300) scale(.3333 .3333)", k: 1,
    paths: [
      "M860 335L875 390L930 420L880 440L850 485L815 440L785 425L830 395z",
      "M575 430L600 510L570 570L535 510z",
      "M185 570Q260 490 320 520Q345 550 330 570",
    ],
    ells: [[565,540,170,180],[565,540,145,155],[490,335,35,35]],
    dots: [[325,360,30],[222,410,25],[130,470,30],[20,415,30],[55,555,25]],
  },
  {
    tf: "translate(0 0)", k: 1,
    paths: [
      "M48 48L58 72L72 88L54 100L46 124L36 100L18 88L38 74z",
      "M0 180L42 158L66 212L0 250M0 300L78 240M0 560L40 600L0 640",
      "M44 300L58 340L78 356L50 372L40 410L28 376L10 352L36 336z",
      "M0 470L78 450M0 520L78 505M0 720Q40 650 78 620M20 780L60 760L78 830L30 850z",
      "M0 960Q40 920 78 960Q50 1010 0 1030M10 1130L78 1110M10 1180L78 1165M0 1220L78 1205",
      "M20 1300Q10 1260 50 1240L78 1250",
    ],
    ells: [],
    dots: [[30,30,14],[62,150,8],[20,270,7],[60,430,7],[18,600,9],[60,700,8],[40,900,10],[62,1060,8],[20,1080,6],[55,1350,9]],
  },
];

function Doodles() {
  return (
    <DoodleLayer viewBox="0 0 2938 1975" aria-hidden="true">
      {LAYERS.map((l, i) => (
        <g key={i} transform={l.tf}>
          {l.paths.map((d, j) => <path key={j} d={d} />)}
          {l.ells.map(([cx, cy, rx, ry], j) => <ellipse key={j} cx={cx} cy={cy} rx={rx} ry={ry} />)}
          {l.dots.map(([cx, cy, r], j) => <ellipse key={j} cx={cx} cy={cy} rx={r} ry={r * l.k} />)}
          {l.petals && Array.from({ length: l.petals.n }, (_, j) => (
            <ellipse key={j} cx={l.petals.cx} cy={l.petals.cy - 68} rx="17" ry="46"
              transform={`rotate(${(j * 360) / l.petals.n} ${l.petals.cx} ${l.petals.cy})`} />
          ))}
          {l.labels && l.labels.map(([t, x, y, s], j) => (
            <text key={j} x={x} y={y} fontSize={s}>{t}</text>
          ))}
        </g>
      ))}
    </DoodleLayer>
  );
}

export default function App() {
  return (
    <Page>
      <GlobalStyle />
      <Doodles />
      <Chat>
        <Bubble $clipped>
          <Para $first>
            <Line $ls={-0.72}>And then the 3rd retainer came, secured on the Christmas Day itself <PleadingFace /> she’s</Line>
            <Line $nudge={4} $ls={-0.51}><Redacted />emailed me about looking for funnel support (I contacted her 3</Line>
            <Line $nudge={-1} $ls={-0.4}>months ago cuz she was looking to hire an onboarding support, but I didn’t make</Line>
            <Line $nudge={1} $ls={-0.4}>it bc of inconsistent working shifts). But now it’s a yes! And next Monday will have</Line>
            <Line $ls={-0.54}>the first meeting with her. Also $500/ month.</Line>
          </Para>
          <Para>
            <Line>All happened in Dec <PleadingFace $before={2} /></Line>
          </Para>
          <Para>
            <Line $nudge={6}>So meaning I’ll have $1500/month + part time pharmacist pay, and maybe some</Line>
            <Line $nudge={-1}>projects too!</Line>
          </Para>
          <Para>
            <Line $nudge={1}>I rmb saying hope to secure a retainer and a $1k project by end of Dec, didn’t</Line>
            <Line $nudge={1} $ls={-0.47}>managed to secure the $1k project but I got 3 retainers <PleadingFace /> I’m super grateful for</Line>
            <Line $nudge={3}>that!</Line>
          </Para>
          <Para>
            <Line $nudge={1} $ls={-0.55}>I have another 3 projects in discussion now, so January will be super bz, but also</Line>
            <Line $nudge={-1}>super looking forward to the days after CNY!</Line>
          </Para>
          <Para>
            <Line $nudge={1}>That’s all from me haha sorry it’s abit long bc lots of things happened last month</Line>
          </Para>
          <MetaRow>
            <Time>16:49</Time>
          </MetaRow>
        </Bubble>
        <Reaction><Heart /></Reaction>
        <Bubble $gap={21}>
          <Line $ls={-0.3}>Haha! I rmb you saying if they like your design style they’re gonna like it, and if</Line>
          <Line $nudge={1} $ls={-0.56}>they want to hire you they will, and now I can truly understand what you said</Line>
          <SplitRow>
            <Line $ls={-0.65}>earlier haha. Thank you so much for your guidance Kristy! <HeartsFace $drop={-14} /></Line>
            <Meta $top={39}>
              <Time>16:51</Time>
            </Meta>
          </SplitRow>
        </Bubble>
        <SentRow>
          <SentBubble>
            <SplitRow>
              <Line $ls={-0.3}>walao Elaine! this is so amazing! so happy for you lei!! well done babe!!</Line>
              <Meta $top={38}>
                <Time $sent>19:01</Time>
                <TickSvg viewBox="0 0 56 36" aria-hidden="true">
                  <path d="M1 21L14 33L37 2" />
                  <path d="M27 31L32 33L54 2" />
                </TickSvg>
              </Meta>
            </SplitRow>
          </SentBubble>
        </SentRow>
        <Reaction $right><Heart /></Reaction>
      </Chat>
    </Page>
  );
}
